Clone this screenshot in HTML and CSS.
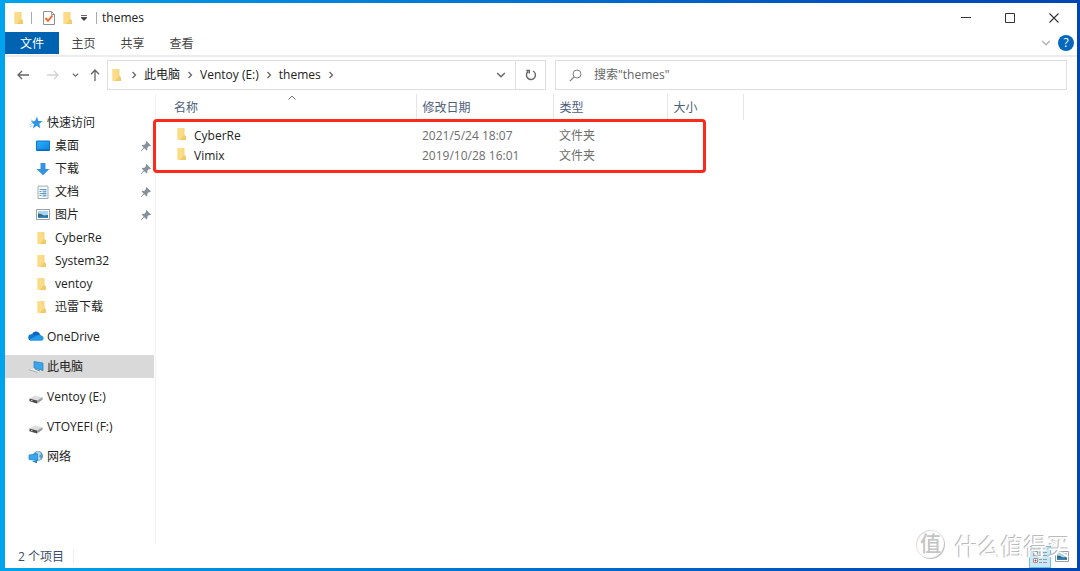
FILE: index.html
```
<!DOCTYPE html>
<html lang="zh-CN">
<head>
<meta charset="utf-8">
<title>themes</title>
<link rel="stylesheet" href="styles.css">
</head>
<body>
<svg class="defs" aria-hidden="true">
  <defs>
    <linearGradient id="fold-back" x1="0" x2="1"><stop offset="0" stop-color="#fde49a"/><stop offset="1" stop-color="#f5d276"/></linearGradient>
    <linearGradient id="screen" x1="0" y1="0" x2="1" y2="1"><stop offset="0" stop-color="#2fb0fa"/><stop offset="1" stop-color="#0c84dc"/></linearGradient>
    <symbol id="folder" viewBox="0 0 12 14">
      <path d="M1.500 1h7v7.500l1.500 1V13H1.500z" fill="url(#fold-back)"/>
      <path d="M5 11.500L8.500 8l1.500 1.500V13H4z" fill="#f2cb69"/>
      <path d="M1.500 1L4 2v11l-2.500-.7z" fill="#fbdc85"/>
    </symbol>
    <symbol id="pin" viewBox="0 0 12 12">
      <path d="M6.500 1L11 5.500 9.800 6.300 8.900 6 7.200 8 7.400 9.600 6.500 10.400 4.300 8.200 1.200 11.200 .8 10.800 3.700 7.600 1.600 5.600 2.600 4.700 4.200 4.900 6 3.100 5.800 2z" fill="#85919b"/>
    </symbol>
    <symbol id="chev" viewBox="0 0 8 8"><path d="M2.500 1L5.500 4l-3 3" fill="none" stroke="#666" stroke-width="1.300"/></symbol>
    <symbol id="down" viewBox="0 0 10 8"><path d="M1.200 2L5 5.800 8.800 2" fill="none" stroke="currentColor" stroke-width="1.500"/></symbol>
    <symbol id="drive" viewBox="0 0 14 10">
      <path d="M.5 4.500L6 1.500l7.500 1.700L8 6.500z" fill="#dedede"/>
      <path d="M.5 4.500L8 6.500v3L.5 7.200z" fill="#4a4a4a"/>
      <path d="M8 6.500l5.500-3.300v2.500L8 9.500z" fill="#9b9b9b"/>
      <path d="M2 6.300l1.500.4" stroke="#ddd"/>
    </symbol>
    <symbol id="picture" viewBox="0 0 14 11">
      <path d="M.5.500h13v10H.5z" fill="#fff" stroke="#9aa2a8"/>
      <path d="M2 2h10v7H2z" fill="#a8d5f5"/>
      <path d="M2 4.500l3 .5 3 1.500 4-.5V9H2z" fill="#2c6f78"/>
      <path d="M2 7.500l5-.3 5 .8v1H2z" fill="#3f7fc0"/>
    </symbol>
  </defs>
</svg>
<div class="window">
  <header class="titlebar">
    <svg class="folder"><use href="#folder"/></svg>
    <i class="bar"></i>
    <button class="plain" aria-label="属性"><svg width="12" height="14" viewBox="0 0 12 14"><path d="M.5.500h8l3 3v10H.5z" fill="#fff" stroke="#919191"/><path d="M8.500.500v3h3" fill="none" stroke="#919191"/><path d="M2.500 7L5 9.800l4.500-5.300" fill="none" stroke="#f0672a" stroke-width="1.900"/></svg></button>
    <button class="plain newfolder" aria-label="新建文件夹"><svg class="folder"><use href="#folder"/></svg></button>
    <button class="plain" aria-label="自定义快速访问工具栏"><svg width="6" height="6" viewBox="0 0 6 6"><path d="M0 .5h6M0 2.500h6L3 5.500z" stroke="#444" stroke-width=".8" fill="#333"/></svg></button>
    <i class="bar last"></i>
    <h1>themes</h1>
    <div class="controls">
      <button class="plain" aria-label="最小化"><svg width="10" height="10" viewBox="0 0 10 10"><path d="M0 4.500h10" stroke="#333"/></svg></button>
      <button class="plain" aria-label="最大化"><svg width="10" height="10" viewBox="0 0 10 10"><path d="M.5.500h9v9h-9z" fill="none" stroke="#333"/></svg></button>
      <button class="plain" aria-label="关闭"><svg width="10" height="10" viewBox="0 0 10 10"><path d="M.5.500l9 9M9.500.500l-9 9" stroke="#333" stroke-width="1.100"/></svg></button>
    </div>
  </header>
  <nav class="ribbon" aria-label="功能区">
    <button class="tab file">文件</button>
    <button class="tab">主页</button>
    <button class="tab">共享</button>
    <button class="tab">查看</button>
    <button class="plain expand" aria-label="展开功能区"><svg width="10" height="8"><use href="#down"/></svg></button>
    <button class="help" aria-label="帮助">?</button>
  </nav>
  <div class="toolbar">
    <div class="history">
      <button class="plain" aria-label="返回"><svg width="12" height="10" viewBox="0 0 12 10"><path d="M12 5H1M5 1L1 5l4 4" fill="none" stroke="#666" stroke-width="1.300"/></svg></button>
      <button class="plain forward" aria-label="前进"><svg width="12" height="10" viewBox="0 0 12 10"><path d="M0 5h11M7 1l4 4-4 4" fill="none" stroke="#d2d2d2" stroke-width="1.300"/></svg></button>
      <button class="plain recent" aria-label="最近浏览的位置"><svg width="7" height="6"><use href="#down"/></svg></button>
      <button class="plain" aria-label="上移"><svg width="10" height="12" viewBox="0 0 10 12"><path d="M5 12V1M1 5.200L5 1l4 4.200" fill="none" stroke="#666" stroke-width="1.300"/></svg></button>
    </div>
    <div class="address">
      <svg class="folder"><use href="#folder"/></svg>
      <svg class="chev"><use href="#chev"/></svg>
      <a href="#pc">此电脑</a>
      <svg class="chev"><use href="#chev"/></svg>
      <a href="#e">Ventoy (E:)</a>
      <svg class="chev"><use href="#chev"/></svg>
      <a href="#themes">themes</a>
      <svg class="chev"><use href="#chev"/></svg>
      <button class="plain drop" aria-label="以前的位置"><svg width="10" height="8"><use href="#down"/></svg></button>
      <button class="refresh" aria-label="刷新"><svg width="12" height="12" viewBox="0 0 12 12"><path d="M8 2a4.500 4.500 0 1 1-5 .6M1.300 1.500h3v3" fill="none" stroke="#666" stroke-width="1.400"/></svg></button>
    </div>
    <label class="search">
      <svg width="13" height="13" viewBox="0 0 13 13"><circle cx="8" cy="5" r="4" fill="none" stroke="#808080"/><path d="M5 8L.8 12.200" stroke="#808080" stroke-width="1.200"/></svg>
      <input type="search" placeholder='搜索"themes"' aria-label="搜索">
    </label>
  </div>
  <div class="body">
    <nav class="tree" aria-label="导航窗格">
      <ul class="quick">
        <li><a href="#quick"><svg class="ic" viewBox="0 0 14 14"><path d="M8 .8l1.400 4.100 4.300.2-3.400 2.700 1 4.400L7.700 9.800 3.800 12.500 5 8.200 1.800 5.500l4.200-.4z" fill="#2f94e4"/><path d="M.5 8.500l3-.8M1 11l2.500-1.500M2 4l2 .8" stroke="#9fcff3"/></svg>快速访问</a></li>
        <li class="sub"><a href="#desktop"><svg class="ic" viewBox="0 0 14 14"><path d="M.5 2h13v9.500H.5z" fill="url(#screen)" stroke="#0878cf"/><path d="M1 11h12" stroke="#075fae"/></svg>桌面</a><svg class="pin"><use href="#pin"/></svg></li>
        <li class="sub"><a href="#downloads"><svg class="ic" viewBox="0 0 14 14"><path d="M4.500 1h5v6h4L7 13.300.5 7h4z" fill="#3591e2"/></svg>下载</a><svg class="pin"><use href="#pin"/></svg></li>
        <li class="sub"><a href="#documents"><svg class="ic" viewBox="0 0 14 14"><path d="M2 1.500l1-.8 1 .8 1-.8 1 .8 1-.8 1 .8 1-.8 1 .8 1-.8 1 .8v12H2z" fill="#f8fbfd" stroke="#8d979e" stroke-width=".8"/><path d="M3.500 4.500h7M3.500 6.500h2M3.500 8.500h7M3.500 10.500h2" stroke="#679dbd"/><path d="M6.500 5.500h4v2h-4zM6.500 9.500h4v2h-4z" fill="#70afd5"/></svg>文档</a><svg class="pin"><use href="#pin"/></svg></li>
        <li class="sub"><a href="#pictures"><svg class="ic"><use href="#picture" y="1" width="14" height="11"/></svg>图片</a><svg class="pin"><use href="#pin"/></svg></li>
        <li class="sub"><a href="#cyber"><svg class="ic"><use href="#folder" width="12" height="14"/></svg>CyberRe</a></li>
        <li class="sub"><a href="#sys"><svg class="ic"><use href="#folder" width="12" height="14"/></svg>System32</a></li>
        <li class="sub"><a href="#ventoy"><svg class="ic"><use href="#folder" width="12" height="14"/></svg>ventoy</a></li>
        <li class="sub"><a href="#xunlei"><svg class="ic"><use href="#folder" width="12" height="14"/></svg>迅雷下载</a></li>
      </ul>
      <ul class="places">
        <li><a href="#onedrive"><svg class="ic wide" viewBox="0 0 16 14"><path d="M4 4.300A4.200 4.200 0 0 1 11.500 3.500L13 6 5 10 1 7z" fill="#0b65bd"/><path d="M3.800 4.300c2-.6 3.500.5 4.500 1.400L3 10.500A3.100 3.100 0 0 1 3.800 4.300z" fill="#0d78d0"/><path d="M8 6c2-1.500 7-1.200 7.600 1.800.2 1.700-1 3-2.600 3H3.200c-.8 0-1.500-.4-1.900-1z" fill="#2499e8"/></svg>OneDrive</a></li>
        <li class="current"><a href="#pc" aria-current="true"><svg class="ic wide" viewBox="0 0 16 14"><path d="M6 1.500l9 1.500v7.500L6 8z" fill="#3aa5ec" stroke="#287eb7" stroke-width=".7"/><path d="M1 9.500l4.500-1 8 2.300-4 1.700z" fill="#e3e8eb"/><path d="M1 9.700l8.500 2.800" stroke="#a8b3ba"/><path d="M7 9l5 2" stroke="#6f8391"/></svg>此电脑</a></li>
        <li><a href="#e"><svg class="ic wide" viewBox="0 0 16 14"><use href="#drive" x="1" y="4" width="14" height="10"/></svg>Ventoy (E:)</a></li>
        <li><a href="#f"><svg class="ic wide" viewBox="0 0 16 14"><use href="#drive" x="1" y="4" width="14" height="10"/></svg>VTOYEFI (F:)</a></li>
        <li><a href="#network"><svg class="ic wide" viewBox="0 0 16 14"><circle cx="10" cy="6" r="5" fill="#5b9cc4"/><path d="M8 2c3-1 4 0 5 2l-2 2 2 3-3 2z" fill="#b7d6e5"/><path d="M1 5l8.500-1.200v6.700L1 9.500z" fill="#36a7f0" stroke="#1f80c3" stroke-width=".7"/><path d="M4 11.500l5 1.800V10z" fill="#2786c9"/></svg>网络</a></li>
      </ul>
    </nav>
    <main class="files">
      <table>
        <colgroup><col class="c-name"><col class="c-date"><col class="c-type"><col class="c-size"><col></colgroup>
        <thead><tr><th>名称<svg class="sort" viewBox="0 0 8 5"><path d="M.5 4.500L4 1l3.500 3.500" fill="none" stroke="#777"/></svg></th><th>修改日期</th><th>类型</th><th>大小</th><td></td></tr></thead>
        <tbody>
          <tr><td><svg class="folder"><use href="#folder"/></svg>CyberRe</td><td>2021/5/24 18:07</td><td>文件夹</td><td></td><td></td></tr>
          <tr><td><svg class="folder"><use href="#folder"/></svg>Vimix</td><td>2019/10/28 16:01</td><td>文件夹</td><td></td><td></td></tr>
        </tbody>
      </table>
      <div class="highlight"></div>
    </main>
  </div>
  <footer class="status">
    <span class="count">2 个项目</span>
    <div class="views">
      <button class="view on" aria-label="详细信息"><svg width="16" height="14" viewBox="0 0 16 14"><path d="M1.500 1.500h4v4h-4zM1.500 8.500h4v4h-4z" fill="#fff" stroke="#999"/><path d="M3 3h1v1H3zM3 10h1v1H3z" fill="#d5452c" stroke="#d5452c"/><path d="M7 2.500h3M11 2.500h4M7 5.500h3M11 5.500h4M7 9.500h3M11 9.500h4M7 12.500h3M11 12.500h4" stroke="#8b9da8"/></svg></button>
      <button class="view" aria-label="大缩略图"><svg width="14" height="11"><use href="#picture"/></svg></button>
    </div>
  </footer>
  <div class="watermark" aria-hidden="true"><span class="seal">值</span><span class="mark">什么值得买</span></div>
</div>
</body>
</html>
```
FILE: styles.css
```
* { box-sizing: border-box; }
body {
  margin: 0;
  min-height: 100vh;
  padding: 3px 3px 3px 5px;
  display: flex;
  background: linear-gradient(90deg, #00a4ec 0, #0088dc 25%, #0070cf 50%, #0050bc 80%, #0046b2 100%);
  font: 12px/16px "Open Sans", "Noto Sans CJK SC", sans-serif;
  color: #222;
}
.defs { position: absolute; width: 0; height: 0; }
svg { display: block; flex: none; }
button, input { font: inherit; color: inherit; }
a { color: inherit; text-decoration: none; }
ul { list-style: none; margin: 0; padding: 0; }
.plain { border: 0; padding: 0; background: none; display: flex; align-items: center; justify-content: center; }
.folder { width: 12px; height: 14px; }

.window { position: relative; flex: 1; display: flex; flex-direction: column; background: #fff; }

.titlebar { display: flex; align-items: center; height: 29px; padding: 1px 1px 0 8px; }
.bar { width: 1px; height: 12px; margin: 0 11px 0 6px; background: #aaa; }
.bar.last { margin: 0 5px 0 9px; }
.newfolder { margin: 0 7px; }
.titlebar h1 { margin: 0; font-size: 12px; font-weight: 400; }
.controls { margin-left: auto; display: flex; align-self: stretch; }
.controls .plain { width: 44px; }

.ribbon { display: flex; align-items: center; height: 25px; padding: 0 3px 1px 0; border-bottom: 2px solid #ececec; color: #444; }
.tab { border: 0; background: none; width: 49px; height: 22px; padding: 2px 0 0; }
.tab.file { width: 54px; background: #0063b1; color: #fff; }
.expand { margin-left: auto; color: #b5b5b5; }
.help { width: 16px; height: 16px; margin-left: 7px; padding: 0; border: 0; border-radius: 50%; background: #0668bd; color: #fff; line-height: 16px; }

.toolbar { display: flex; padding: 3px 10px 4px 12px; color: #555; }
.history { display: flex; align-items: center; width: 90px; }
.forward { margin: 0 13px 0 18px; }
.recent { margin-right: 11px; }
.address, .search { display: flex; align-items: center; height: 30px; border: 1px solid #dedede; }
.address { flex: 435; color: #222; padding-left: 3px; }
.address a { margin: 0 6px; }
.chev { width: 8px; height: 8px; }
.address .folder + .chev { margin-left: 7px; }
.drop { margin: 0 9px 0 auto; color: #666; }
.refresh { width: 30px; align-self: stretch; padding: 0; border: 0; border-left: 1px solid #dedede; background: none; display: flex; align-items: center; justify-content: center; }
.search { flex: 498; margin-left: 9px; padding-left: 13px; }
.search input { flex: 1; min-width: 0; margin-left: 12px; padding: 0; border: 0; outline: 0; background: none; }
.search input::placeholder { color: #666; opacity: 1; }

.body { flex: 1; display: flex; }
.tree { width: 151px; padding-top: 17px; border-right: 1px solid #f2f2f2; }
.tree li { display: flex; align-items: center; height: 23px; margin-right: 1px; padding-left: 23px; }
.tree a { display: flex; align-items: center; flex: 1; gap: 4px; }
.tree .sub { padding-left: 31px; }
.tree .sub a { gap: 5px; }
.tree .quick .ic { width: 14px; height: 14px; }
.tree .quick li:first-child { padding-left: 24px; }
.ic.wide { width: 16px; height: 14px; }
.tree .places a { gap: 3px; }
.pin { width: 12px; height: 12px; margin-right: 2px; }
.places { display: flex; flex-direction: column; gap: 7px; margin-top: 7px; }
.tree .current { background: #d9d9d9; }

.files { flex: 1; position: relative; }
table { width: 100%; table-layout: fixed; border-collapse: collapse; }
.c-name { width: 260px; }
.c-date { width: 137px; }
.c-type { width: 114px; }
.c-size { width: 76px; }
th { position: relative; height: 26px; padding: 2px 0 0 6px; border-right: 1px solid #e5e5e5; text-align: left; font-weight: 400; color: #4c607a; }
th:first-child { padding-left: 18px; }
.sort { position: absolute; left: 132px; top: 1px; width: 8px; height: 5px; }
tbody::before { content: ""; display: block; height: 7px; }
td { height: 20px; padding: 0 0 0 6px; vertical-align: baseline; color: #6d6d6d; }
td:first-child { padding-left: 20px; color: #222; }
td .folder { display: inline-block; vertical-align: -1px; margin-right: 6px; }
.highlight { position: absolute; left: -3px; top: 25px; width: 553px; height: 54px; border: 3px solid #fb2a1d; border-radius: 4px; }

.status { display: flex; align-items: center; height: 24px; padding: 1px 5px 0 13px; color: #3b5068; }
.count { padding-right: 9px; border-right: 1px solid #f0f0f0; }
.views { margin-left: auto; display: flex; gap: 1px; }
.view { width: 20px; height: 22px; padding: 0; border: 0; background: none; display: flex; align-items: center; justify-content: center; }
.view.on { width: 22px; border: 1px solid #70c0e0; background: #cce8f6; }

.watermark { position: absolute; right: 7px; bottom: 7px; display: flex; align-items: center; gap: 10px; color: #fff; text-shadow: -1px -1px 0 #bbb, -1px 0 0 #ccc; }
.seal { width: 29px; height: 29px; border-radius: 50%; box-shadow: inset -1px -1px 1px #bbb, inset 1px 1px 1px #ddd; color: #c4c4c4; text-shadow: none; font-size: 21px; font-weight: 500; line-height: 27px; text-align: center; }
.mark { padding-top: 3px; font-size: 23px; line-height: 30px; }
```
